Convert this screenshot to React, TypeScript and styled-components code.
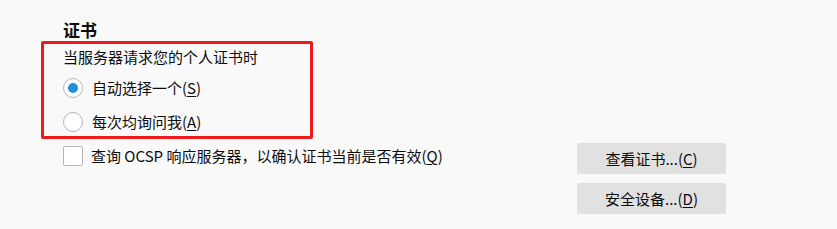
import React from "react";
import styled, { createGlobalStyle } from "styled-components";

const Global = createGlobalStyle`
  html, body {
    margin: 0;
    padding: 0;
    background: #f9f9fa;
  }
  body {
    font-family: "Noto Sans CJK SC", "Noto Sans", sans-serif;
    color: #0c0c0d;
    font-size: 15px;
  }
`;

const Page = styled.div`
  width: 837px;
  height: 229px;
  box-sizing: border-box;
  padding: 20px 0 0 41px;
  background: #f9f9fa;
`;

const Heading = styled.h2`
  margin: 0 0 1px 22px;
  font-size: 17px;
  line-height: 20px;
  font-weight: 700;
`;

const Highlight = styled.div`
  box-sizing: border-box;
  width: 272px;
  height: 98px;
  border: 3px solid #f01a1a;
  border-radius: 2px;
  padding: 3px 0 2px 19px;
  display: flex;
  flex-direction: column;
`;

const Caption = styled.div`
  line-height: 20px;
  height: 20px;
  margin-bottom: 9px;
`;

const RadioRow = styled.label`
  display: flex;
  align-items: center;
  gap: 9px;
  height: 24px;
  line-height: 24px;
  & + & {
    margin-top: 10px;
  }
`;

const RadioCircle = styled.span<{ $checked?: boolean }>`
  box-sizing: border-box;
  width: 20px;
  height: 20px;
  border-radius: 50%;
  border: 1px solid #b6b6b8;
  background: #fff;
  display: flex;
  align-items: center;
  justify-content: center;
  flex: none;
  &::after {
    content: "";
    width: 10px;
    height: 10px;
    border-radius: 50%;
    background: ${(p) => (p.$checked ? "#2590da" : "transparent")};
  }
`;

const Key = styled.span`
  text-decoration: underline;
  text-underline-offset: 2px;
`;

const BottomRow = styled.div`
  display: flex;
  align-items: flex-start;
  margin-top: 4px;
`;

const CheckRow = styled.label`
  display: flex;
  align-items: center;
  gap: 8px;
  margin-left: 22px;
  width: 514px;
  height: 26px;
  line-height: 26px;
`;

const CheckBox = styled.span`
  box-sizing: border-box;
  width: 20px;
  height: 20px;
  border: 1px solid #b6b6b8;
  border-radius: 2px;
  background: #fff;
  flex: none;
`;

const ButtonColumn = styled.div`
  display: flex;
  flex-direction: column;
  gap: 9px;
`;

const Button = styled.button`
  width: 149px;
  height: 31px;
  border: none;
  border-radius: 2px;
  background: #e1e1e2;
  color: #0c0c0d;
  font-family: "Noto Sans CJK SC", "Noto Sans", sans-serif;
  font-size: 15px;
  padding: 0;
  line-height: 31px;
`;

export default function App() {
  return (
    <>
      <Global />
      <Page>
        <Heading>证书</Heading>
        <Highlight>
          <Caption>当服务器请求您的个人证书时</Caption>
          <RadioRow>
            <RadioCircle $checked />
            <span>
              自动选择一个(<Key>S</Key>)
            </span>
          </RadioRow>
          <RadioRow>
            <RadioCircle />
            <span>
              每次均询问我(<Key>A</Key>)
            </span>
          </RadioRow>
        </Highlight>
        <BottomRow>
          <CheckRow>
            <CheckBox />
            <span>
              查询 OCSP 响应服务器，以确认证书当前是否有效(<Key>Q</Key>)
            </span>
          </CheckRow>
          <ButtonColumn>
            <Button>
              查看证书...(<Key>C</Key>)
            </Button>
            <Button>
              安全设备...(<Key>D</Key>)
            </Button>
          </ButtonColumn>
        </BottomRow>
      </Page>
    </>
  );
}
